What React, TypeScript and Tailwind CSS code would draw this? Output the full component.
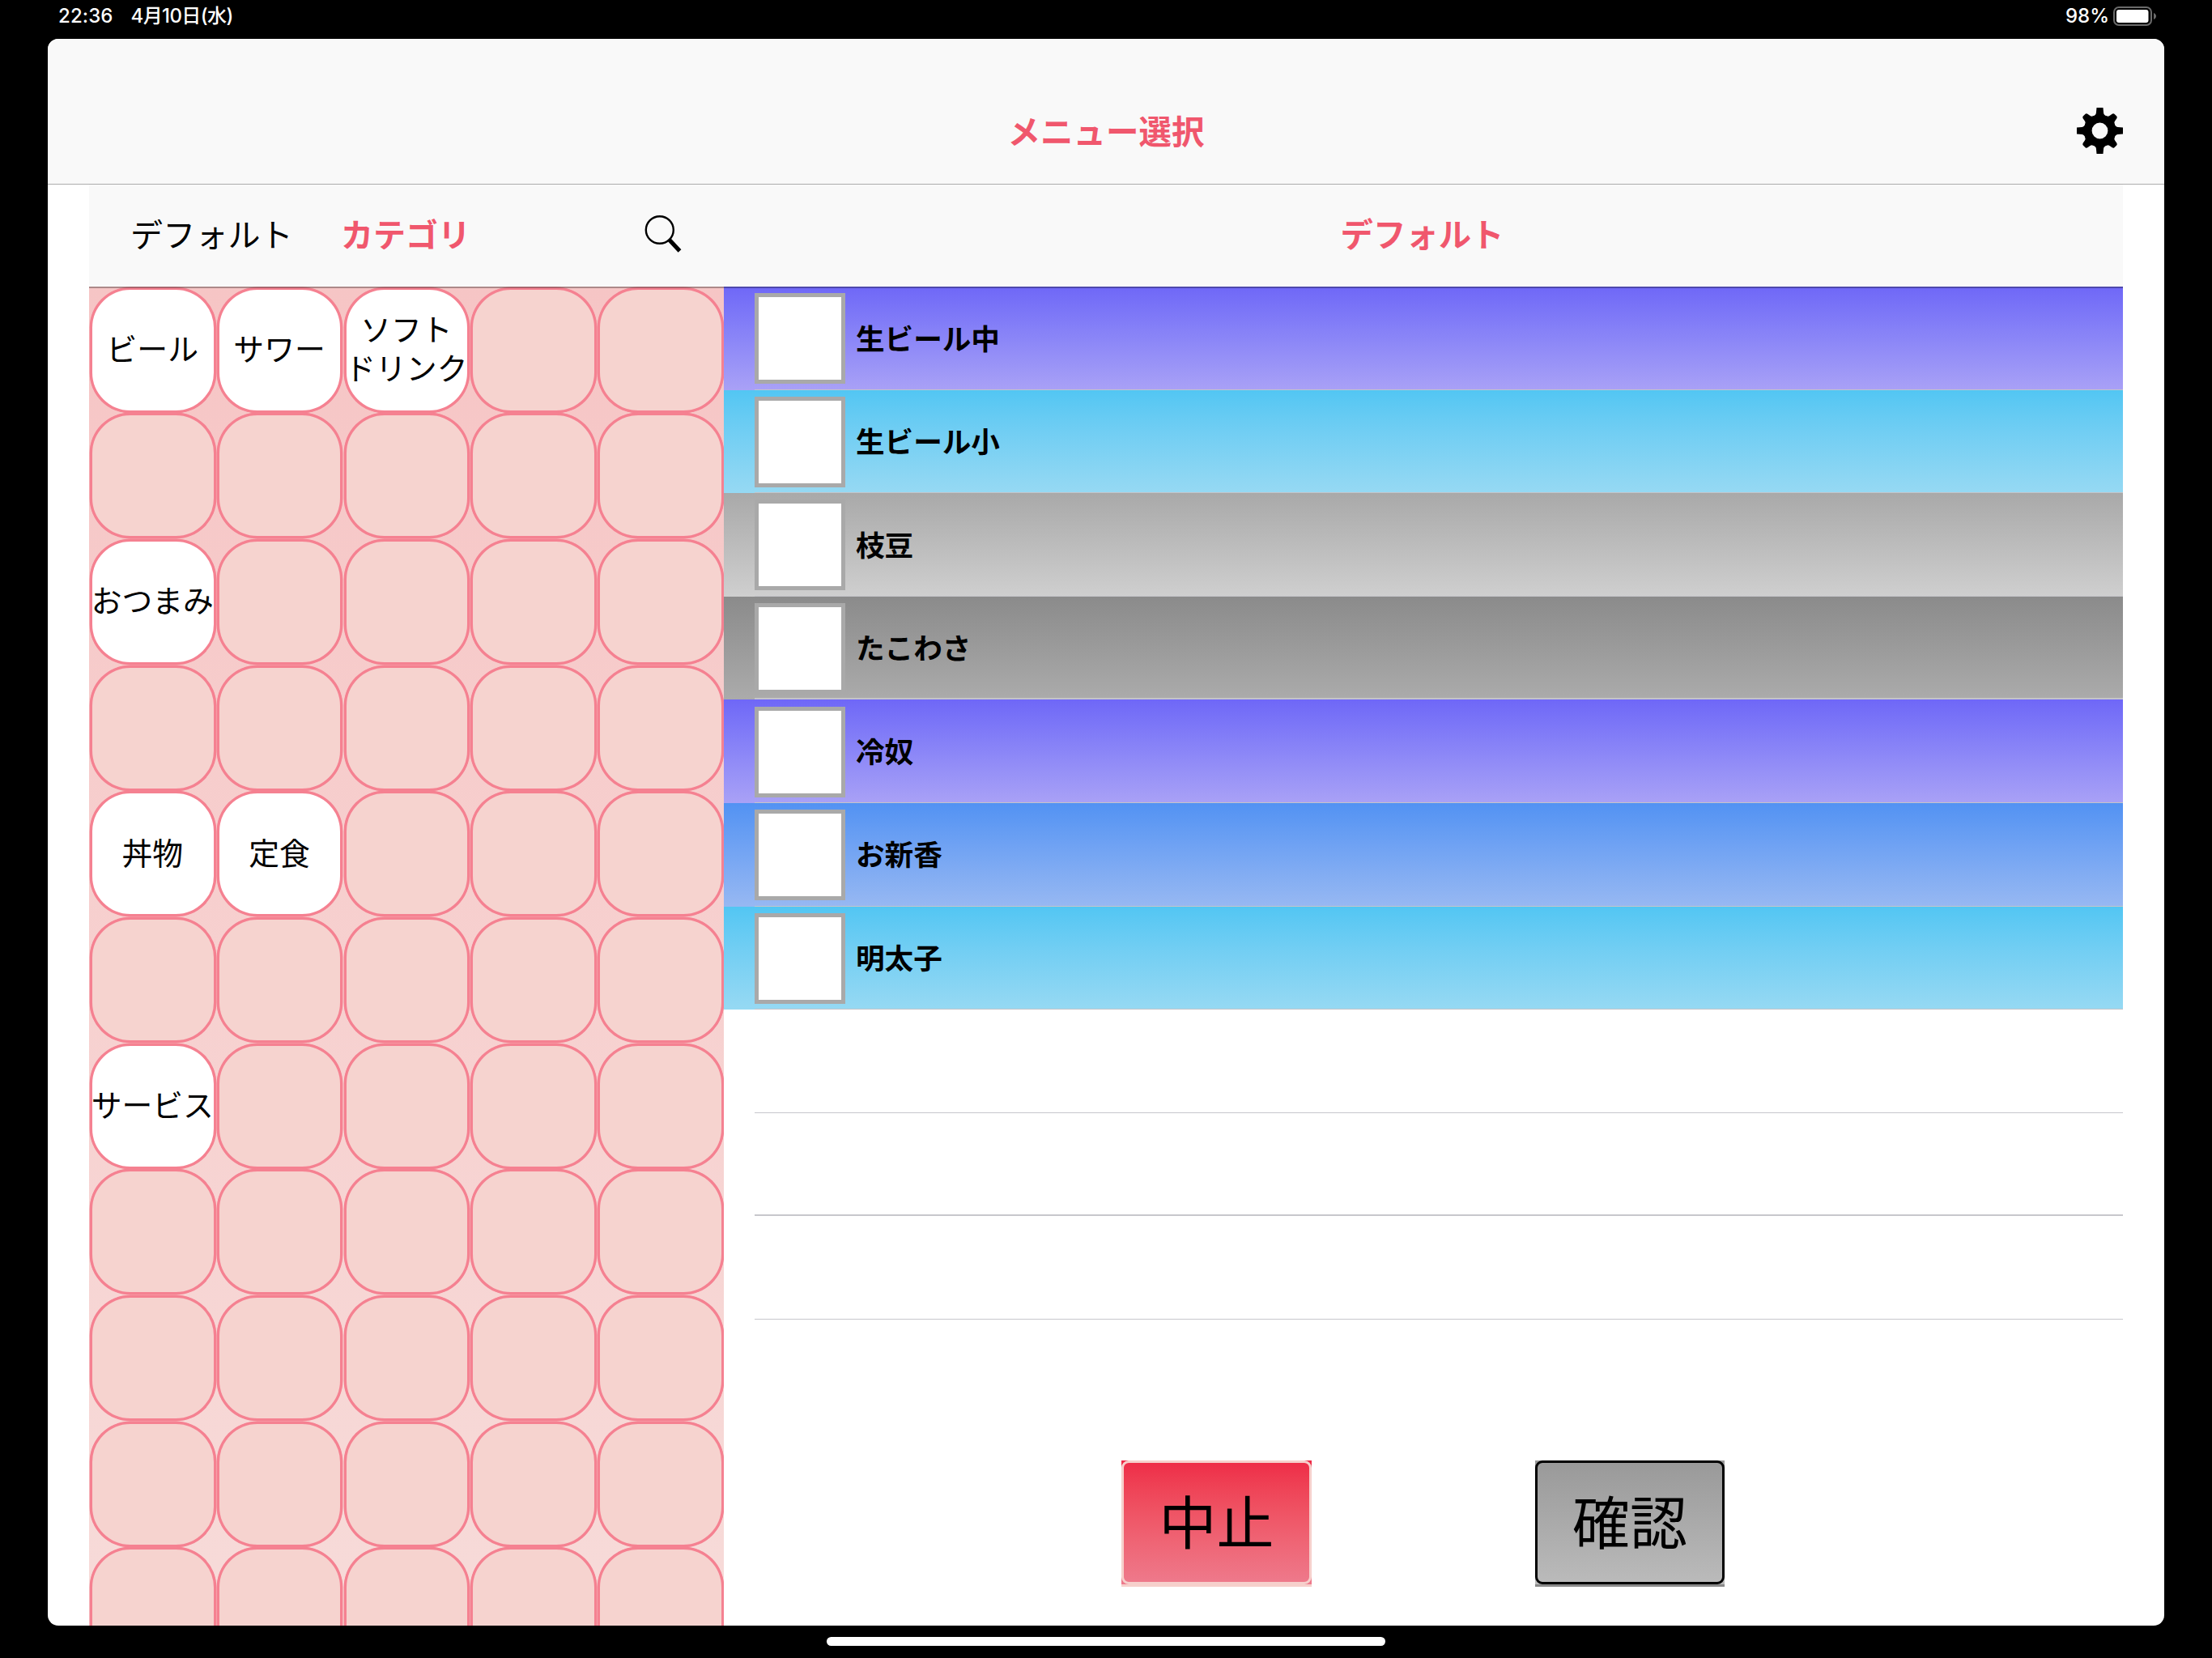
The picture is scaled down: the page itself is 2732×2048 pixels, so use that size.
import clsx from "clsx";

const CATEGORIES: Record<number, string[]> = {
  0: ["ビール"],
  1: ["サワー"],
  2: ["ソフト", "ドリンク"],
  10: ["おつまみ"],
  20: ["丼物"],
  21: ["定食"],
  30: ["サービス"],
};

const ITEMS = [
  { name: "生ビール中", color: "from-[#6f67f7] to-[#a9a1f6]" },
  { name: "生ビール小", color: "from-[#52c6f3] to-[#96d9f3]" },
  { name: "枝豆", color: "from-[#a9a9a9] to-[#cfcfcf]" },
  { name: "たこわさ", color: "from-[#8b8b8b] to-[#ababab]" },
  { name: "冷奴", color: "from-[#6f67f7] to-[#a9a1f6]" },
  { name: "お新香", color: "from-[#5292f3] to-[#97b8f2]" },
  { name: "明太子", color: "from-[#52c6f3] to-[#96d9f3]" },
];

function StatusBar() {
  return (
    <div className="flex h-12 shrink-0 items-start justify-between pt-1 pr-[68px] pl-[72px] text-[24px] leading-8 font-medium text-white">
      <div className="flex gap-[22px]">
        <span className="tracking-[0.1px]">22:36</span>
        <span className="tracking-[-0.6px]">4月10日(水)</span>
      </div>
      <div className="flex items-center gap-[5px]">
        <span>98%</span>
        <svg width="54" height="24" viewBox="0 0 54 24">
          <rect x="1" y="1" width="46" height="22" rx="6" fill="none" stroke="#6b6b6b" strokeWidth="2" />
          <rect x="4" y="4" width="39.5" height="16" rx="3" fill="#fff" />
          <path d="M50 8c4 1.500 4 6.500 0 8z" fill="#6b6b6b" />
        </svg>
      </div>
    </div>
  );
}

function GearIcon() {
  return (
    <svg width="57" height="57" viewBox="-28.500 -28.500 57 57">
      <circle r="14.800" fill="none" stroke="#000" strokeWidth="9.800" />
      {[0, 45, 90, 135, 180, 225, 270, 315].map((a) => (
        <path
          key={a}
          transform={`rotate(${a})`}
          d={
            a % 90 === 0
              ? "M-10 -17.500Q-4.800 -19 -4.600 -22L-4 -28.500H4L4.600 -22Q4.800 -19 10 -17.500z"
              : "M-9 -17.500Q-5 -19 -4.500 -22L-4 -25.500Q-3.500 -27.300 -2 -27.300H2Q3.500 -27.300 4 -25.500L4.500 -22Q5 -19 9 -17.500z"
          }
        />
      ))}
    </svg>
  );
}

function SearchIcon() {
  return (
    <svg width="48" height="48" viewBox="0 0 48 48" fill="none" stroke="#000">
      <ellipse cx="19.800" cy="19" rx="17" ry="16.800" strokeWidth="2.400" />
      <path d="M31 30.500L44.500 45" strokeWidth="5.200" />
    </svg>
  );
}

function CategoryCell({ lines }: { lines?: string[] }) {
  return (
    <button
      className={clsx(
        "mr-[0.3px] ml-px flex h-[155px] flex-col items-center justify-center rounded-[50px] border-[3px] border-[#f58191] pr-px pb-0.5 text-[37.800px] leading-[48px] whitespace-nowrap shadow-[0_0_0_0.4px_#f58191]",
        lines ? "bg-white" : "bg-[#f6d3cf]",
      )}
    >
      {lines?.map((line) => <span key={line}>{line}</span>)}
    </button>
  );
}

function CategoryPanel() {
  return (
    <section className="flex w-[784px] flex-col">
      <div className="flex h-[126px] shrink-0 items-center bg-[#f9f9f9] px-[51px] text-[40px] leading-none">
        <button className="w-[260px] text-left tracking-[0.2px]">デフォルト</button>
        <button className="font-bold text-[#f0576d]">カテゴリ</button>
        <button className="ml-auto pb-[5px]">
          <SearchIcon />
        </button>
      </div>
      <div className="grid min-h-0 flex-1 auto-rows-[155.670px] grid-cols-5 overflow-hidden bg-linear-to-b from-[#f6c5c5] to-[#f7dbd9] pt-[0.600px]">
        {Array.from({ length: 55 }, (_, i) => (
          <CategoryCell key={i} lines={CATEGORIES[i]} />
        ))}
      </div>
    </section>
  );
}

function MenuPanel() {
  return (
    <section className="flex flex-1 flex-col">
      <h2 className="flex h-[126px] shrink-0 items-center justify-center bg-[#f9f9f9] pr-[3px] text-[40.400px] leading-none font-bold text-[#f0576d]">
        デフォルト
      </h2>
      <ul>
        {ITEMS.map((item, i) => (
          <li key={item.name} className={clsx("h-[127.600px] bg-linear-to-b pl-[38px]", item.color)}>
            <div className={clsx("flex h-full items-center gap-[13px] border-[#c4c4c9] pt-0.5", i === 3 ? "border-b-2" : "border-b")}>
              <span className="size-28 border-[5px] border-[#a9a9a9] bg-white" />
              <span className="pt-0.5 text-[35.600px] leading-none font-bold">{item.name}</span>
            </div>
          </li>
        ))}
        {[0, 1, 2].map((i) => (
          <li key={i} className="h-[127.600px] pl-[38px]">
            <div className={clsx("h-full border-[#c7c7cc]", i === 1 ? "border-b-2" : "border-b")} />
          </li>
        ))}
      </ul>
      <div className="mt-auto mb-12 flex gap-[276px] pl-[491px] text-[71px] leading-none">
        <div className="w-[235px] border-b-[3px] border-[#f6d0cc] bg-linear-to-b from-[#ee2a46] to-[#ee7a8c]">
          <button className="flex h-[153px] w-full items-center justify-center rounded-[9px] border-[3px] border-[#f6d0cc] pt-0.5">
            中止
          </button>
        </div>
        <div className="w-[234px] border-b-[3px] border-[#8a8a8a] bg-linear-to-b from-[#999999] to-[#bbbbbb]">
          <button className="flex h-[153px] w-full items-center justify-center rounded-[9px] border-[3px] border-black pt-0.5">
            確認
          </button>
        </div>
      </div>
    </section>
  );
}

export default function App() {
  return (
    <div className="flex h-[2048px] w-[2732px] flex-col bg-black font-[Inter,'Noto_Sans_CJK_JP',sans-serif] text-black">
      <StatusBar />
      <main className="ml-[59px] flex h-[1960px] w-[2614px] shrink-0 flex-col overflow-hidden rounded-[13px] bg-white">
        <header className="grid h-[180px] shrink-0 grid-cols-[1fr_auto_1fr] items-center border-b border-[#acacac] bg-[#f9f9f9] px-[51px] pt-12">
          <h1 className="col-start-2 pt-[5px] text-[40.500px] leading-none font-bold text-[#f0576d]">メニュー選択</h1>
          <button className="justify-self-end">
            <GearIcon />
          </button>
        </header>
        <div className="relative mx-[51px] flex min-h-0 flex-1">
          <CategoryPanel />
          <MenuPanel />
          {/* hairline shadow under both column headers */}
          <div className="absolute inset-x-0 top-[126px] h-0.5 bg-black/30" />
        </div>
      </main>
      <div className="mt-3.5 h-[11px] w-[690px] self-center rounded-full bg-white" />
    </div>
  );
}
